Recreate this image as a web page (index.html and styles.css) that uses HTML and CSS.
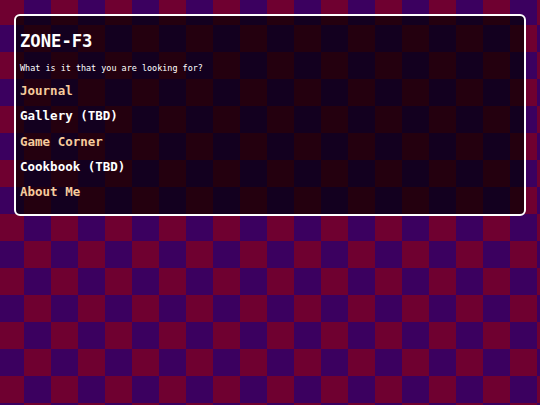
FILE: index.html
```html
<!DOCTYPE html>
<html lang="en">
<head>
<meta charset="utf-8">
<title>ZONE-F3</title>
<link rel="stylesheet" href="styles.css">
</head>
<body>
<main class="card">
  <h1 class="title">ZONE-F3</h1>
  <p class="subtitle">What is it that you are looking for?</p>
  <nav class="menu">
    <a class="item peach" href="#">Journal</a>
    <a class="item white" href="#">Gallery (TBD)</a>
    <a class="item peach" href="#">Game Corner</a>
    <a class="item white" href="#">Cookbook (TBD)</a>
    <a class="item peach" href="#">About Me</a>
  </nav>
</main>
</body>
</html>
```

FILE: styles.css
```css
html, body {
  margin: 0;
  padding: 0;
  height: 100%;
}

body {
  background-color: #3b005f;
  background-image: repeating-conic-gradient(#3b005f 0 25%, #6f0030 0 50%);
  background-size: 54px 54px;
  background-position: -3px -2px;
  font-family: "DejaVu Sans Mono", "Liberation Mono", monospace;
  color: #ffffff;
  padding: 14px;
  box-sizing: border-box;
}

.card {
  display: flex;
  flex-direction: column;
  border: 2px solid #ffffff;
  border-radius: 6px;
  background: rgba(0, 0, 0, 0.67);
  padding: 15px 4px 10px 4px;
}

.title {
  margin: 0;
  font-size: 17.2px;
  line-height: 20px;
  font-weight: bold;
  color: #ffffff;
}

.subtitle {
  margin: 11px 0 0 0;
  font-size: 8.45px;
  line-height: 12px;
  font-weight: normal;
  color: #ffffff;
}

.menu {
  display: flex;
  flex-direction: column;
  margin-top: 4px;
}

.item {
  font-size: 12.5px;
  line-height: 25.25px;
  font-weight: bold;
  text-decoration: none;
}

.peach {
  color: #f6cb9c;
}

.white {
  color: #ffffff;
}
```
